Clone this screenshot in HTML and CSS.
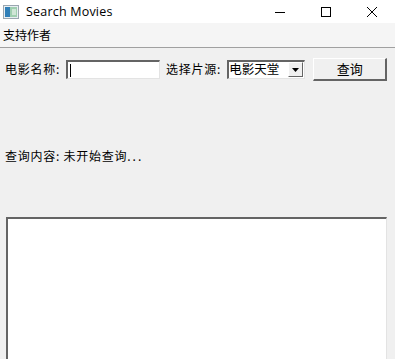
FILE: index.html
```html
<!DOCTYPE html>
<html lang="zh-CN">
<head>
    <meta charset="UTF-8">
    <title>Search Movies</title>
    <link rel="stylesheet" href="styles.css">
</head>
<body>
    <div class="window">
        <div class="titlebar">
            <div class="title">
                <svg class="app-icon" width="16" height="14" viewBox="0 0 16 14">
                    <rect x="0.5" y="0.5" width="15" height="13" fill="#e8eef2" stroke="#9aa7b0"/>
                    <rect x="2" y="2" width="5" height="10" fill="#2f7fb8"/>
                    <rect x="7" y="2" width="7" height="10" fill="#9fcfb0"/>
                    <rect x="9" y="4" width="4" height="6" fill="#cfe6d6"/>
                </svg>
                <span>Search Movies</span>
            </div>
            <div class="win-buttons">
                <span class="win-btn">
                    <svg width="12" height="12" viewBox="0 0 12 12"><path d="M1 6.5h10" stroke="#000" stroke-width="1"/></svg>
                </span>
                <span class="win-btn">
                    <svg width="12" height="12" viewBox="0 0 12 12"><rect x="1.5" y="1.5" width="9" height="9" fill="none" stroke="#000"/></svg>
                </span>
                <span class="win-btn">
                    <svg width="12" height="12" viewBox="0 0 12 12"><path d="M1 1l10 10M11 1L1 11" stroke="#000" stroke-width="1"/></svg>
                </span>
            </div>
        </div>

        <div class="menubar">
            <span class="menu-item">支持作者</span>
        </div>

        <div class="content">
            <div class="search-row">
                <label class="label">电影名称:</label>
                <div class="textbox"><span class="caret"></span></div>
                <label class="label">选择片源:</label>
                <div class="combo">
                    <span class="combo-text">电影天堂</span>
                    <span class="combo-arrow">
                        <svg width="7" height="4" viewBox="0 0 7 4"><path d="M0 0h7L3.5 4z" fill="#000"/></svg>
                    </span>
                </div>
                <button class="btn">查询</button>
            </div>

            <div class="status">查询内容: 未开始查询<span class="dots">...</span></div>

            <div class="output"></div>
        </div>
    </div>
</body>
</html>
```

FILE: styles.css
```css
:root {
    --face: #f0f0f0;
    --dark-edge: #646464;
    --light-edge: #e3e3e3;
}

* {
    box-sizing: border-box;
}

body {
    margin: 0;
    width: 395px;
    height: 359px;
    overflow: hidden;
    font-family: "Noto Sans CJK SC", "Liberation Sans", sans-serif;
    font-size: 12px;
    color: #000;
    background-color: var(--face);
}

.window {
    display: flex;
    flex-direction: column;
    height: 100%;
}

.titlebar {
    height: 23px;
    background-color: #fff;
    display: flex;
    justify-content: space-between;
    align-items: center;
}

.title {
    display: flex;
    align-items: center;
    padding-left: 3px;
    font-family: "Open Sans", "Liberation Sans", sans-serif;
    font-size: 12.5px;
    letter-spacing: 0.2px;
}

.app-icon {
    margin-right: 7px;
}

.win-buttons {
    display: flex;
}

.win-btn {
    width: 46px;
    height: 23px;
    display: flex;
    align-items: center;
    justify-content: center;
}

.menubar {
    height: 25px;
    background-color: #f5f5f5;
    border-bottom: 1px solid #a0a0a0;
    display: flex;
    align-items: center;
    padding-left: 3px;
    line-height: 1;
}

.content {
    flex: 1;
    display: flex;
    flex-direction: column;
    padding: 9px 0 0 5px;
}

.search-row {
    display: flex;
    align-items: center;
    height: 24px;
}

.search-row > * {
    flex-shrink: 0;
}

.label {
    line-height: 1;
    white-space: nowrap;
    letter-spacing: 0.75px;
}

.textbox {
    width: 94px;
    height: 19px;
    background: #fff;
    border-top: 2px solid var(--dark-edge);
    border-left: 2px solid var(--dark-edge);
    border-right: 1px solid var(--light-edge);
    border-bottom: 1px solid var(--light-edge);
    margin: 0 6px 0 6px;
    padding: 2px 0 0 2px;
}

.caret {
    display: block;
    width: 1px;
    height: 13px;
    background: #000;
}

.combo {
    width: 78px;
    height: 19px;
    background: #fff;
    border-top: 2px solid var(--dark-edge);
    border-left: 2px solid var(--dark-edge);
    border-right: 1px solid var(--light-edge);
    border-bottom: 1px solid var(--light-edge);
    display: flex;
    align-items: center;
    justify-content: space-between;
    margin: 0 8px 0 6px;
}

.combo-text {
    font-size: 12.5px;
    line-height: 1;
    white-space: nowrap;
}

.combo-arrow {
    width: 15px;
    height: 15px;
    background: var(--face);
    border-top: 1px solid #fff;
    border-left: 1px solid #fff;
    border-right: 1px solid var(--dark-edge);
    border-bottom: 1px solid var(--dark-edge);
    display: flex;
    align-items: center;
    justify-content: center;
    margin-right: 1px;
}

.btn {
    width: 74px;
    height: 23px;
    font: inherit;
    font-size: 13px;
    background: var(--face);
    border-top: 1px solid #fff;
    border-left: 1px solid #fff;
    border-right: 2px solid var(--dark-edge);
    border-bottom: 2px solid var(--dark-edge);
    padding: 0;
}

.status {
    margin-top: 69px;
    line-height: 1;
    letter-spacing: 0.75px;
}

.dots {
    letter-spacing: 2px;
}

.output {
    margin: 55px 8px 0 1px;
    flex: 1;
    background: #fff;
    border-top: 2px solid var(--dark-edge);
    border-left: 2px solid var(--dark-edge);
    border-right: 1px solid var(--light-edge);
}
```
